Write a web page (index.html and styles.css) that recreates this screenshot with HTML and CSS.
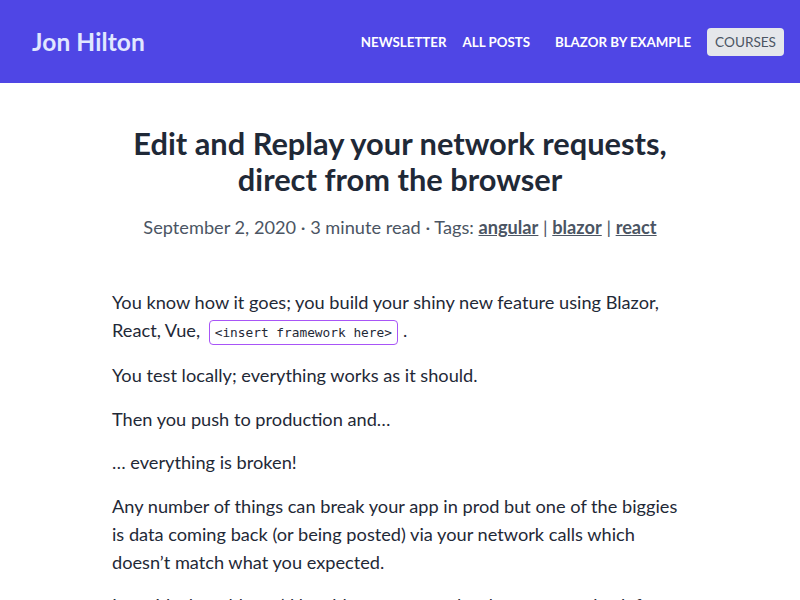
FILE: index.html
```html
<!DOCTYPE html>
<html lang="en">
<head>
<meta charset="utf-8">
<title>Edit and Replay your network requests, direct from the browser</title>
<link rel="stylesheet" href="styles.css">
</head>
<body>
<header class="site-header">
  <a class="brand" href="#">Jon Hilton</a>
  <nav class="nav">
    <a class="nav-link" href="#">Newsletter</a>
    <a class="nav-link" href="#">All posts</a>
    <a class="nav-link nav-link-wide" href="#">Blazor by Example</a>
    <a class="nav-button" href="#">Courses</a>
  </nav>
</header>
<main class="post">
  <h1 class="post-title">Edit and Replay your network requests, direct from the browser</h1>
  <p class="post-meta">September 2, 2020 · 3 minute read · Tags: <a href="#">angular</a> | <a href="#">blazor</a> | <a href="#">react</a></p>
  <article class="post-body">
    <p class="first">You know how it goes; you build your shiny new feature using Blazor, React, Vue, <code>&lt;insert framework here&gt;</code>.</p>
    <p>You test locally; everything works as it should.</p>
    <p>Then you push to production and…</p>
    <p>… everything is broken!</p>
    <p>Any number of things can break your app in prod but one of the biggies is data coming back (or being posted) via your network calls which doesn’t match what you expected.</p>
    <p>In an ideal world, you’d be able to see exactly what was sent back from the server, and tweak it to see how your app reacts.</p>
  </article>
</main>
</body>
</html>
```
FILE: styles.css
```css
html, body {
  margin: 0;
  padding: 0;
  background: #ffffff;
}
body {
  font-family: Lato, "Noto Sans", sans-serif;
  color: #1f2937;
}
a { color: inherit; }

.site-header {
  height: 83px;
  background: #4f46e5;
  display: flex;
  align-items: center;
  justify-content: space-between;
  padding: 0 16px 0 32px;
}
.brand {
  color: #e0e7ff;
  text-decoration: none;
  font-size: 24.5px;
  font-weight: 700;
  letter-spacing: 0.1px;
}
.nav {
  display: flex;
  align-items: center;
}
.nav-link {
  color: #ffffff;
  text-decoration: none;
  text-transform: uppercase;
  font-weight: 700;
  font-size: 13.3px;
  padding: 0 8px;
}
.nav-link-wide { margin-left: 9px; margin-right: 8px; }
.nav-button {
  color: #4b5563;
  background: #e5e7eb;
  text-decoration: none;
  text-transform: uppercase;
  font-size: 13.6px;
  font-weight: 400;
  padding: 0 8px;
  height: 28px;
  line-height: 28px;
  border-radius: 4px;
}

.post {
  width: 576px;
  margin: 0 auto;
}
.post-title {
  margin: 43px 0 0;
  text-align: center;
  font-size: 30.8px;
  line-height: 36px;
  font-weight: 700;
  color: #1f2937;
  padding: 0 20px;
}
.post-meta {
  margin: 15px 0 0;
  text-align: center;
  font-size: 18.2px;
  line-height: 28px;
  color: #4b5563;
}
.post-meta a {
  font-weight: 700;
  text-decoration: underline;
}
.post-body {
  margin-top: 47px;
  font-size: 18.2px;
  line-height: 28px;
}
.post-body p {
  margin: 0 0 15.5px;
}
.post-body p.first { margin-bottom: 17px; }
code {
  font-family: "DejaVu Sans Mono", monospace;
  font-size: 12.8px;
  line-height: 1;
  color: #1f2937;
  border: 1px solid #a855f7;
  border-radius: 4px;
  padding: 4px 5px;
  margin: 0 5px 0 4px;
}
```
